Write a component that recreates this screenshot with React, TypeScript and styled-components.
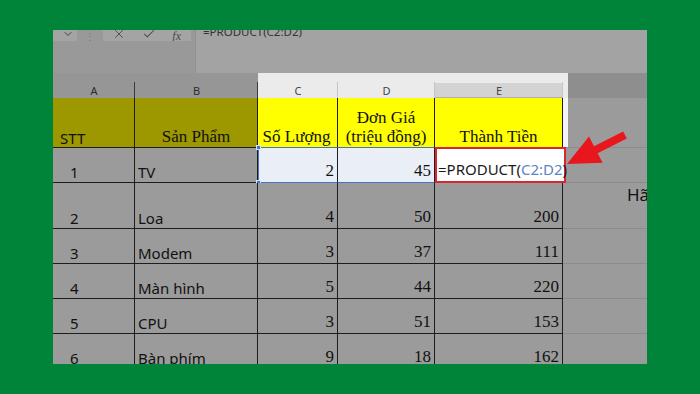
import styled, { createGlobalStyle } from "styled-components";
import { X, Check, ChevronDown } from "lucide-react";

const GlobalStyle = createGlobalStyle`
  html, body {
    margin: 0;
    padding: 0;
    width: 700px;
    height: 394px;
    overflow: hidden;
    background: #00843a;
  }
  * { box-sizing: border-box; }
`;

const LINE = "#1d1d1d";
const DIM = "#9b9b9b";
const SANS = `"Noto Sans", "Open Sans", sans-serif`;
const SERIF = `"Liberation Serif", "DejaVu Serif", serif`;

const Page = styled.div`
  width: 700px;
  height: 394px;
  padding: 30px 53px;
  background: #00843a;
`;

const Frame = styled.div`
  width: 594px;
  height: 334px;
  overflow: hidden;
  display: flex;
  flex-direction: column;
  background: ${DIM};
`;

const FormulaBar = styled.div`
  flex-shrink: 0;
  height: 43px;
  display: flex;
  background: #999999;
`;

const ToolArea = styled.div`
  width: 142px;
  display: flex;
  align-items: flex-start;
`;

const NameBoxEnd = styled.div`
  width: 24px;
  height: 11px;
  background: #a4a4a4;
  display: flex;
  justify-content: flex-end;
  align-items: flex-end;
  overflow: hidden;
  color: #444;
  padding-right: 3px;
`;

const Dots = styled.div`
  width: 26px;
  height: 11px;
  overflow: hidden;
  display: flex;
  justify-content: center;
  align-items: flex-end;
  color: #7a7a7a;
  font: 10px ${SANS};
  line-height: 10px;
`;

const ToolBox = styled.div`
  width: 88px;
  height: 11px;
  background: #a4a4a4;
  display: flex;
  align-items: flex-end;
  justify-content: space-between;
  padding: 0 10px 0 9px;
  overflow: hidden;
  color: #4a4a4a;
`;

const Fx = styled.span`
  font: italic 12px ${SERIF};
  line-height: 10px;
  color: #4a4a4a;
`;

const FormulaInput = styled.div`
  flex: 1;
  background: #a3a3a3;
  border-left: 1px solid #909090;
  padding-left: 7px;
  overflow: hidden;
  font: 11.5px ${SANS};
  color: #333;
  line-height: 12px;
`;

const FormulaText = styled.div`
  margin-top: -4px;
`;

const Sheet = styled.div`
  flex-shrink: 0;
  position: relative;
  display: grid;
  grid-template-columns: 82px 123px 80px 97px 128px 84px;
  grid-template-rows: 25px 50px 35px 46px 35px 35px 35px 35px;
`;

const ColHead = styled.div<{ $tone: "dim" | "light" | "sel" | "edge" }>`
  position: relative;
  display: flex;
  align-items: center;
  justify-content: center;
  padding-top: 10px;
  font: 11px ${SANS};
  color: ${(p) => (p.$tone === "dim" ? "#2c2c2c" : "#444")};
  background: ${(p) =>
    p.$tone === "dim" ? "#969696" : p.$tone === "edge" ? "#8e8e8e" : "#ebebeb"};
  ${(p) => p.$tone === "edge" && "box-shadow: inset 5px 0 #ebebeb;"}
  ${(p) =>
    p.$tone === "sel" &&
    "background: linear-gradient(#ebebeb 0 10px, #d3d3d3 10px); border-bottom: 1px solid #b0b0b0;"}
  &::after {
    content: "";
    position: absolute;
    right: 0;
    top: 9px;
    bottom: 0;
    width: 1px;
    background: ${(p) => (p.$tone === "dim" ? "#3a3a3a" : "#c4c4c4")};
    display: ${(p) => (p.$tone === "edge" ? "none" : "block")};
  }
`;

const Cell = styled.div<{
  $bg?: string;
  $align?: "flex-start" | "center" | "flex-end";
  $serif?: boolean;
  $pl?: number;
  $pb?: number;
}>`
  position: relative;
  display: flex;
  align-items: flex-end;
  justify-content: ${(p) => p.$align || "flex-start"};
  padding: 0 3px ${(p) => p.$pb ?? 1}px ${(p) => p.$pl ?? 3}px;
  border-right: 1px solid ${LINE};
  border-bottom: 1px solid ${LINE};
  background: ${(p) => p.$bg || DIM};
  font: ${(p) => (p.$serif ? `17px ${SERIF}` : `15px ${SANS}`)};
  color: #111;
  line-height: 1.15;
  white-space: nowrap;
`;

const HeadText = styled.span`
  text-align: center;
  white-space: pre-line;
`;

const SelCell = styled(Cell)<{ $first?: boolean }>`
  background: #e9eef7;
  border-top: 1px solid #4472c4;
  border-bottom: 1px solid #4472c4;
  ${(p) => p.$first && "border-left: 1px solid #4472c4;"}
  margin-top: -1px;
`;

const Handle = styled.span<{ $pos: "top" | "bottom" }>`
  position: absolute;
  left: -3px;
  ${(p) => (p.$pos === "top" ? "top: -3px;" : "bottom: -3px;")}
  width: 5px;
  height: 5px;
  background: #4472c4;
  border: 1px solid #dce5f5;
`;

const FormulaCell = styled.div`
  position: relative;
  z-index: 2;
  margin-right: -3px;
  margin-top: -1px;
  display: flex;
  align-items: flex-end;
  padding: 0 0 2px 1px;
  background: #ffffff;
  border: 2px solid #d9272e;
  font: 15px ${SANS};
  color: #1a1a1a;
  white-space: nowrap;
  overflow: visible;
`;

const Ref = styled.span`
  color: #5a86c4;
`;

const FCell = styled.div<{ $strip?: string }>`
  background: ${DIM};
  border-bottom: 1px solid #8c8c8c;
  ${(p) => p.$strip && `box-shadow: inset 5px 0 ${p.$strip};`}
  overflow: hidden;
  font: 17px ${SANS};
  color: #111;
  padding: 0 0 0 64px;
  white-space: nowrap;
`;

const Arrow = styled.svg`
  position: absolute;
  left: 0;
  top: 0;
  width: 594px;
  height: 291px;
  pointer-events: none;
  z-index: 3;
`;

const rows = [
  ["2", "Loa", "4", "50", "200"],
  ["3", "Modem", "3", "37", "111"],
  ["4", "Màn hình", "5", "44", "220"],
  ["5", "CPU", "3", "51", "153"],
  ["6", "Bàn phím", "9", "18", "162"],
];

export default function App() {
  return (
    <>
      <GlobalStyle />
      <Page>
        <Frame>
          <FormulaBar>
            <ToolArea>
              <NameBoxEnd>
                <ChevronDown size={12} strokeWidth={2} style={{ marginBottom: 1 }} />
              </NameBoxEnd>
              <Dots>⋮</Dots>
              <ToolBox>
                <X size={14} strokeWidth={1.6} />
                <Check size={14} strokeWidth={1.8} />
                <Fx>fx</Fx>
              </ToolBox>
            </ToolArea>
            <FormulaInput>
              <FormulaText>=PRODUCT(C2:D2)</FormulaText>
            </FormulaInput>
          </FormulaBar>

          <Sheet>
            <ColHead $tone="dim">A</ColHead>
            <ColHead $tone="dim">B</ColHead>
            <ColHead $tone="light">C</ColHead>
            <ColHead $tone="light">D</ColHead>
            <ColHead $tone="sel">E</ColHead>
            <ColHead $tone="edge" />

            <Cell $bg="#9d9800" $pl={7} $pb={0}>STT</Cell>
            <Cell $bg="#9d9800" $serif $align="center" $pb={0}>
              <HeadText>Sản Phẩm</HeadText>
            </Cell>
            <Cell $bg="#ffff00" $serif $align="center" $pl={1} $pb={0}>
              <HeadText>Số Lượng</HeadText>
            </Cell>
            <Cell $bg="#ffff00" $serif $align="center" $pb={0}>
              <HeadText>{"Đơn Giá\n(triệu đồng)"}</HeadText>
            </Cell>
            <Cell $bg="#ffff00" $serif $align="center" $pb={0}>
              <HeadText>Thành Tiền</HeadText>
            </Cell>
            <FCell $strip="#f4f4f4" />

            <Cell $pl={17}>1</Cell>
            <Cell>TV</Cell>
            <SelCell $first $serif $align="flex-end">
              2
              <Handle $pos="top" />
              <Handle $pos="bottom" />
            </SelCell>
            <SelCell $serif $align="flex-end">45</SelCell>
            <FormulaCell>
              =PRODUCT(<Ref>C2:D2</Ref>)
            </FormulaCell>
            <FCell />

            {rows.map((r, i) => (
              <>
                <Cell key={`a${i}`} $pl={17}>{r[0]}</Cell>
                <Cell key={`b${i}`}>{r[1]}</Cell>
                <Cell key={`c${i}`} $serif $align="flex-end">{r[2]}</Cell>
                <Cell key={`d${i}`} $serif $align="flex-end">{r[3]}</Cell>
                <Cell key={`e${i}`} $serif $align="flex-end">{r[4]}</Cell>
                <FCell key={`f${i}`}>{i === 0 ? "Hãy" : ""}</FCell>
              </>
            ))}

            <Arrow viewBox="0 0 594 291">
              <polygon
                points="514,91 536,63.5 541,73.2 570.2,58.5 573.8,65.5 544.6,80.2 549.6,89.8"
                fill="#e8161d"
              />
            </Arrow>
          </Sheet>
        </Frame>
      </Page>
    </>
  );
}
